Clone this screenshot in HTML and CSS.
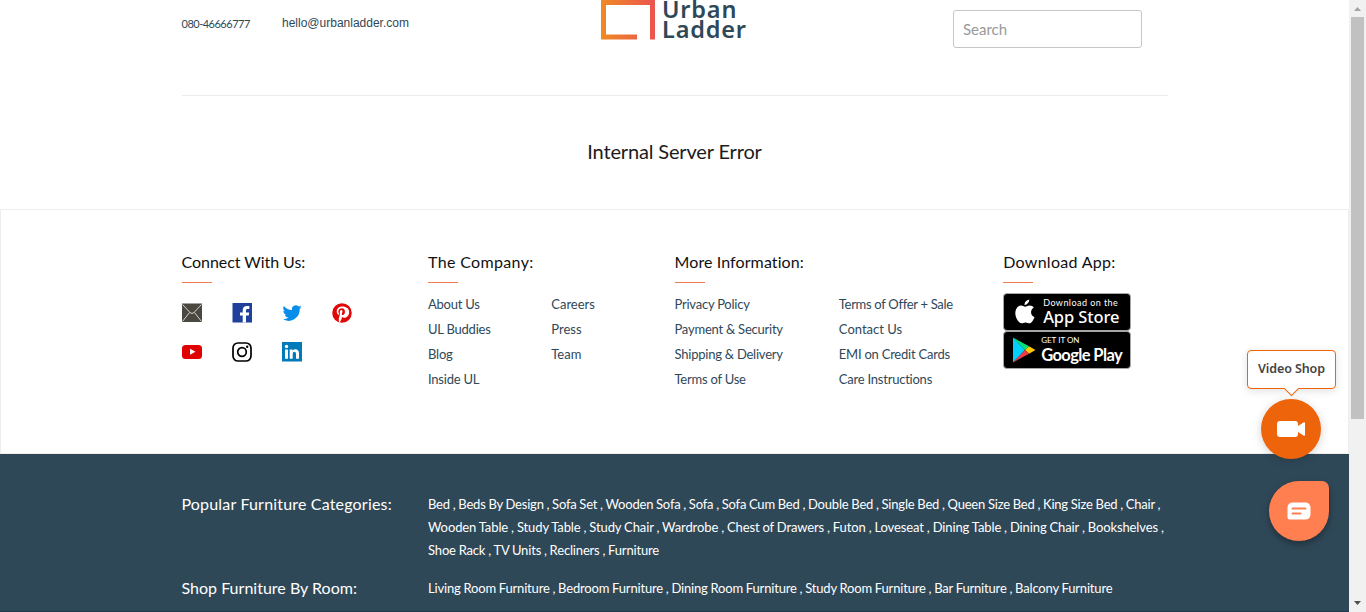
FILE: index.html
```html
<!DOCTYPE html>
<html lang="en">
<head>
<meta charset="utf-8">
<title>Urban Ladder</title>
<link rel="stylesheet" href="styles.css">
</head>
<body>
<div class="window">
<div class="page">
  <header class="header container">
    <div class="contact">
      <span class="phone">080-46666777</span>
      <a class="email">hello@urbanladder.com</a>
    </div>
    <a class="logo">
      <svg width="56" height="40" viewBox="0 0 56 40">
        <defs><linearGradient id="frame" x1="0" x2="1" y1="0" y2="0"><stop offset="0" stop-color="#f08a24"/><stop offset="1" stop-color="#ea5550"/></linearGradient></defs>
        <path fill="url(#frame)" d="M0 0H54V39.500H49V5H5V34.500H36V39.500H0Z"/>
      </svg>
      <span class="logo-text">Urban<br>Ladder</span>
    </a>
    <input class="search" type="text" placeholder="Search">
  </header>
  <main class="error"><h1>Internal Server Error</h1></main>
  <section class="info">
    <div class="info-grid container">
      <div>
        <h2 class="t-connect">Connect With Us:</h2>
        <div class="social">
          <svg width="20" height="20" viewBox="0 0 20 20"><rect y=".5" width="20" height="18.500" fill="#4b4741"/><path d="M.5 1.500L8 9.500Q10 11.500 12 9.500L19.500 1.500M.5 18.500L7.500 9.500M19.500 18.500L12.500 9.500" fill="none" stroke="#e2e1df" stroke-width=".9"/></svg>
          <svg width="20" height="20" viewBox="0 0 20 20"><rect x=".5" width="19.500" height="19.500" fill="#1f419b"/><path fill="#fff" d="M10.700 19.500V12.500H8V9.400H10.700V7.200C10.700 4.600 12.300 3 14.800 3H17.300V6H15.600C14.400 6 14 6.500 14 7.500V9.400H17.200L16.700 12.500H14V19.500Z"/></svg>
          <svg width="20" height="20" viewBox="0 0 24 24"><path fill="#078ee9" d="M23.600 4.900a9 9 0 0 1-2.700.8 4.700 4.700 0 0 0 2.100-2.700 9 9 0 0 1-3 1.200A4.700 4.700 0 0 0 12 8.500 13.500 13.500 0 0 1 2.300 3.600a4.700 4.700 0 0 0 1.500 6.300 4.600 4.600 0 0 1-2.200-.6 4.700 4.700 0 0 0 3.800 4.700 4.800 4.800 0 0 1-2.100.1 4.700 4.700 0 0 0 4.400 3.300A9.600 9.600 0 0 1 .7 19.300a13.500 13.500 0 0 0 20.600-12A9.700 9.700 0 0 0 23.600 4.900Z"/></svg>
          <svg width="20" height="20" viewBox="0 0 24 24"><circle cx="12" cy="12" r="11.700" fill="#e10706"/><path fill="#fff" d="M12.300 4.300C8 4.300 5.700 7 5.700 10.100c0 1.600.8 3.300 2.100 4 .5.200.5 0 .8-1.100 0-.2 0-.3-.1-.5-1.900-2.200-.5-6.300 3.300-6.300 5.300 0 4.400 8.200 1.300 8.200-.9 0-1.500-.7-1.300-1.600.2-1.100.8-2.200.8-3 0-2.300-3.300-2-3.300 1 0 .9.400 1.600.4 1.600L8.300 18c-.3 1.400-.1 3.700.1 4.700l1 .4c.6-.9 1.600-2.500 2-3.900l.8-2.700c.4.700 1.500 1.200 2.600 1.200 3.400 0 5.800-3 5.800-6.900 0-3.700-3.200-6.500-8.300-6.500Z"/></svg>
          <svg width="20" height="20" viewBox="0 0 20 20"><rect y="3" width="20" height="14" rx="3.500" fill="#e10000"/><path fill="#fff" d="M8 6.800V12.800L13.500 9.800Z"/></svg>
          <svg width="20" height="20" viewBox="0 0 20 20" fill="none" stroke="#000" stroke-width="1.700"><rect x="1" y="1" width="18" height="18" rx="5"/><circle cx="10" cy="10" r="4.300"/><circle cx="15.200" cy="4.800" r="1.200" fill="#000" stroke="none"/></svg>
          <svg width="20" height="20" viewBox="0 0 20 20"><rect width="20" height="19.500" fill="#007ab9"/><path fill="#fff" d="M3 7.500H6V16.800H3ZM7.700 7.500H10.500V8.800C12 6.500 17 6.500 17 11.200V16.800H14V11.900C14 8.900 10.700 9 10.700 11.900V16.800H7.700Z"/><circle cx="4.500" cy="4.500" r="1.700" fill="#fff"/></svg>
        </div>
      </div>
      <div>
        <h2 class="t-company">The Company:</h2>
        <div class="links">
          <ul><li>About Us</li><li>UL Buddies</li><li>Blog</li><li>Inside UL</li></ul>
          <ul class="loose"><li>Careers</li><li>Press</li><li>Team</li></ul>
        </div>
      </div>
      <div>
        <h2 class="t-more">More Information:</h2>
        <div class="links">
          <ul><li>Privacy Policy</li><li>Payment &amp; Security</li><li>Shipping &amp; Delivery</li><li>Terms of Use</li></ul>
          <ul><li class="tight">Terms of Offer + Sale</li><li class="loose">Contact Us</li><li>EMI on Credit Cards</li><li>Care Instructions</li></ul>
        </div>
      </div>
      <div>
        <h2 class="t-app">Download App:</h2>
        <div class="stores">
          <div class="badge apple">
            <svg width="20" height="26" viewBox="0 0 20 26"><path fill="#fff" d="M14.200.5C14.400 3.500 12 6 9.500 5.900 9.300 3.200 11.500 1 14.200.5ZM10 7.800C11.200 7.800 12.600 6.400 14.800 6.500 16.500 6.600 17.900 7.300 18.800 8.600 14.600 11.300 15.500 16.600 19.500 18.200 18.500 20.700 16.700 24.300 14.500 24.300 12.900 24.300 12.400 23.400 10.500 23.400 8.600 23.400 8 24.300 6.500 24.300 3.700 24.300.3 18.700.3 14.300.3 9.500 3.200 6.600 6 6.600 7.800 6.600 9 7.800 10 7.800Z"/></svg>
            <div class="badge-text"><span class="small">Download on the</span><span class="big">App Store</span></div>
          </div>
          <div class="badge google">
            <svg width="24" height="26" viewBox="0 0 24 26"><path fill="#00cfff" d="M1 .5V25.500L13 13Z"/><path fill="#00e47a" d="M1 .5L17 9.200 13 13Z"/><path fill="#ffc800" d="M17 9.200L23.500 13 17 16.800 13 13Z"/><path fill="#f5394b" d="M1 25.500L13 13 17 16.800Z"/></svg>
            <div class="badge-text"><span class="small">GET IT ON</span><span class="big">Google Play</span></div>
          </div>
        </div>
      </div>
    </div>
  </section>
  <section class="categories">
    <div class="container">
      <div class="cat-row">
        <h3 class="c1">Popular Furniture Categories:</h3>
        <div class="cat-list">
          <div class="l1">Bed , Beds By Design , Sofa Set , Wooden Sofa , Sofa , Sofa Cum Bed , Double Bed , Single Bed , Queen Size Bed , King Size Bed , Chair ,</div>
          <div class="l2">Wooden Table , Study Table , Study Chair , Wardrobe , Chest of Drawers , Futon , Loveseat , Dining Table , Dining Chair , Bookshelves ,</div>
          <div class="l3">Shoe Rack , TV Units , Recliners , Furniture</div>
        </div>
      </div>
      <div class="cat-row">
        <h3 class="c2">Shop Furniture By Room:</h3>
        <div class="cat-list"><div class="l4">Living Room Furniture , Bedroom Furniture , Dining Room Furniture , Study Room Furniture , Bar Furniture , Balcony Furniture</div></div>
      </div>
    </div>
  </section>
</div>
<div class="scrollbar">
  <svg class="arrow" width="17" height="17"><path d="M5 11H12L8.500 7Z" fill="#a3a3a3"/></svg>
  <div class="thumb"></div>
  <svg class="arrow" width="17" height="17"><path d="M5 6H12L8.500 10Z" fill="#505050"/></svg>
</div>
<div class="video-tip">Video Shop</div>
<div class="video-btn"><svg width="28" height="16" viewBox="0 0 28 16"><path fill="#fff" d="M3 0H18Q21 0 21 3V5L26.500 1.500Q28 .8 28 2V14Q28 15.200 26.500 14.500L21 11V13Q21 16 18 16H3Q0 16 0 13V3Q0 0 3 0Z"/></svg></div>
<div class="chat-btn"><svg width="24" height="18" viewBox="0 0 24 18"><path fill="#fff" d="M6 .5H18Q23.500 .5 23.500 6V12Q23.500 17.500 18 17.500H2.500Q.5 17.500 .5 15.500V6Q.5 .5 6 .5Z"/><path stroke="#ff7f50" stroke-width="2" stroke-linecap="round" d="M5.500 6.500H18.500M5.500 11.500H13.500"/></svg></div>
</div>
</body>
</html>
```
FILE: styles.css
```css
* { box-sizing: border-box; }
body { margin: 0; font-family: Lato, "Liberation Sans", sans-serif; font-variant-ligatures: none; background: #fff; color: #2f4858; }
h1, h2, h3, ul { margin: 0; padding: 0; font-weight: 400; }
.window { position: relative; display: flex; width: 1366px; height: 612px; overflow: hidden; }
.page { width: 1349px; display: flex; flex-direction: column; }
.container { width: 986px; margin-left: 181.5px; }

.header { display: flex; align-items: flex-start; height: 96px; border-bottom: 1px solid #ececec; }
.contact { display: flex; width: 419.5px; padding-top: 15px; line-height: 16px; }
.phone { width: 100.5px; padding-top: 1px; font-size: 11px; letter-spacing: -.5px; }
.email { font: 12px/16px "Liberation Sans", sans-serif; }
.logo { display: flex; width: 352px; height: 44px; }
.logo-text { margin: -1px 0 0 5px; font: 600 23.5px/20px "Noto Sans", sans-serif; letter-spacing: .8px; }
.search { width: 189px; height: 38px; margin-top: 10px; padding: 0 9px; border: 1px solid #c6c6c6; border-radius: 3px; font: 15px Lato, sans-serif; }
.search::placeholder { color: #999; }

.error { height: 113px; padding-top: 43px; text-align: center; }
.error h1 { font-size: 20px; line-height: 25px; letter-spacing: -.15px; color: #1b1b1b; }

.info { height: 245px; border: 1px solid #eee; padding-top: 41px; }
.info-grid { display: grid; grid-template-columns: 3fr 3fr 4fr 2fr; margin-left: 180.5px; }
.info h2 { font-size: 16px; line-height: 22px; color: #111; white-space: nowrap; }
.info h2::after { content: ""; display: block; width: 30px; height: 1px; margin-top: 9px; background: #ee7b51; }
.info h2.t-connect { letter-spacing: -.05px; }
.info h2.t-company { letter-spacing: .35px; }
.info h2.t-more { letter-spacing: .1px; }
.info h2.t-app { letter-spacing: .3px; }
.social { display: grid; grid-template-columns: repeat(4, 50px); row-gap: 19px; padding-top: 20px; }
.social svg { display: block; }
.links { display: grid; grid-template-columns: 1fr 1fr; padding-top: 9px; }
.links ul { list-style: none; font-size: 13px; line-height: 25px; letter-spacing: -.23px; white-space: nowrap; }
.links .loose { letter-spacing: 0; }
.links .tight { letter-spacing: -.3px; }
.stores { padding-top: 10px; }
.badge { display: flex; align-items: center; width: 128px; height: 38px; border: 1px solid #a6a6a6; border-radius: 4px; background: #000; color: #fff; }
.apple { padding-left: 11px; gap: 8px; }
.google { padding-left: 8px; gap: 5px; }
.badge-text { display: flex; flex-direction: column; white-space: nowrap; }
.small { font-size: 9px; line-height: 11px; margin-top: -2px; letter-spacing: .45px; }
.big { font-family: "Noto Sans", sans-serif; font-size: 16.5px; line-height: 18px; font-weight: 500; letter-spacing: -.1px; }
.google .small { font-size: 8px; letter-spacing: 0; }
.google .big { font-family: Lato, sans-serif; font-weight: 700; letter-spacing: -.6px; }

.categories { height: 158px; padding-top: 39px; background: #2f4858; border-bottom: 1px solid #1f3a4c; color: #fff; }
.cat-row { display: grid; grid-template-columns: 246.5px 1fr; margin-bottom: 15px; }
.cat-row h3 { font-size: 16px; line-height: 22px; white-space: nowrap; }
.cat-row .c1 { letter-spacing: .18px; }
.cat-row .c2 { letter-spacing: .01px; }
.cat-list { font-size: 13px; line-height: 23px; white-space: nowrap; }
.l1 { letter-spacing: -.19px; word-spacing: -.33px; }
.l2 { letter-spacing: -.11px; word-spacing: -.25px; }
.l3 { letter-spacing: -.16px; word-spacing: -.33px; }
.l4 { letter-spacing: -.175px; word-spacing: -.3px; }

.scrollbar { display: flex; flex-direction: column; width: 17px; height: 612px; background: #f1f1f1; }
.thumb { width: 13px; height: 402px; margin: 0 2px 176px; background: #c1c1c1; }
.arrow { flex: none; display: block; }

.video-tip { position: absolute; left: 1247px; top: 350px; width: 89px; height: 39px; border: 1px solid #ee640b; border-radius: 4px; background: #fff; box-shadow: 0 2px 8px rgba(0,0,0,.12); text-align: center; font: 600 12.500px/36px "Noto Sans", sans-serif; letter-spacing: -.1px; color: #444; }
.video-tip::after { content: ""; position: absolute; left: 38px; bottom: -5.5px; width: 10px; height: 10px; border: solid #ee640b; border-width: 0 1px 1px 0; background: #fff; transform: rotate(45deg); }
.video-btn { position: absolute; left: 1261px; top: 399px; display: flex; align-items: center; justify-content: center; width: 60px; height: 60px; border-radius: 50%; background: #ee640b; box-shadow: 0 2px 10px rgba(0,0,0,.18); }
.chat-btn { position: absolute; left: 1269px; top: 481px; display: flex; align-items: center; justify-content: center; width: 60px; height: 60px; border-radius: 30px 7px 30px 30px; background: #ff7f50; box-shadow: 0 3px 7px rgba(0,0,0,.35); }
```
